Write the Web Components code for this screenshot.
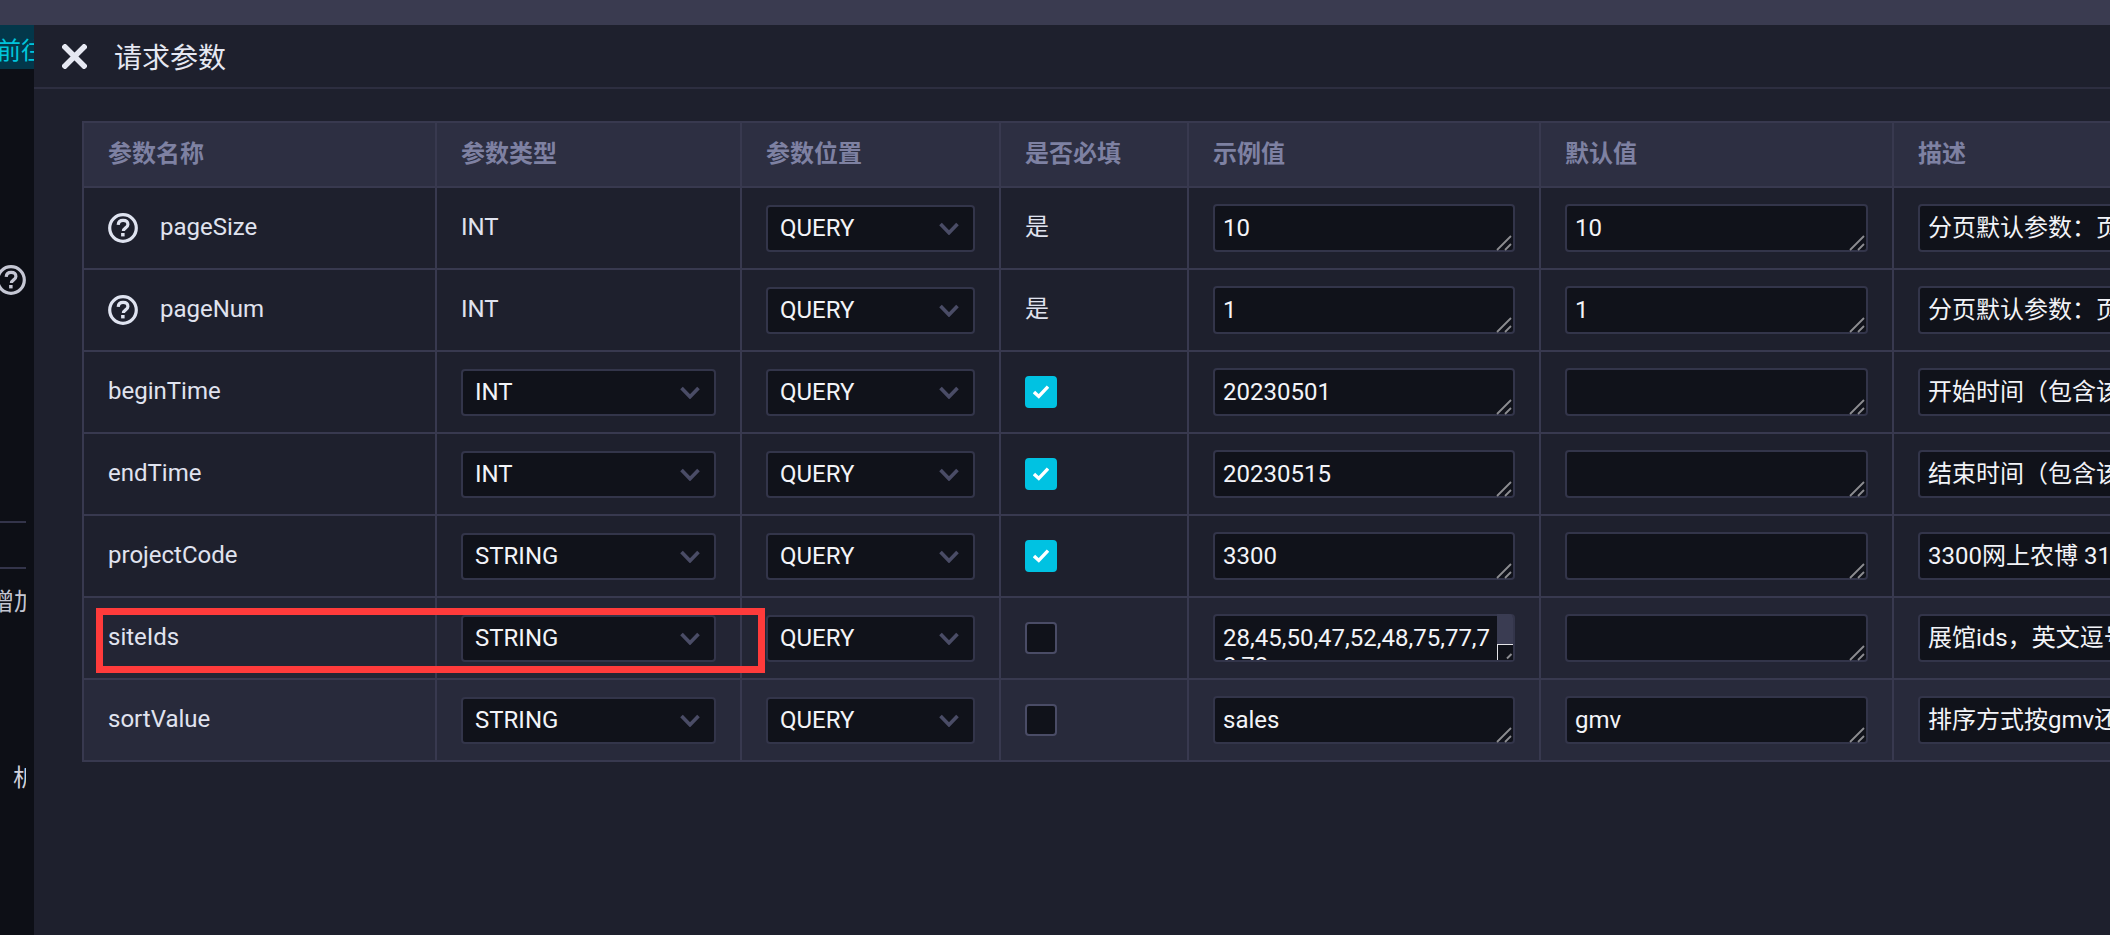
<!DOCTYPE html>
<html lang="zh">
<head>
<meta charset="utf-8">
<title>请求参数</title>
<style>
    html, body { margin: 0; height: 100%; overflow: hidden; background: #1e202d; }
    body { font: 24px/28px Roboto, "Noto Sans CJK SC", sans-serif; color: #e0e3ef; }
</style>
</head>
<body>
<app-shell>
    <side-rail slot="rail"></side-rail>
    <drawer-panel heading="请求参数">
        <param-table></param-table>
    </drawer-panel>
</app-shell>

<script>
const helpSvg = /*html*/`
    <svg viewBox="0 0 30 30" width="30" height="30" fill="none">
        <circle cx="15" cy="15" r="13.300" stroke="currentColor" stroke-width="3.200"/>
        <path d="M10.200 11.800c.2-2.800 2.200-4.400 4.900-4.400 2.900 0 4.800 1.600 4.800 4 0 3.500-4.500 3.400-4.500 6.700" stroke="currentColor" stroke-width="3.200"/>
        <rect x="13.100" y="20" width="3.500" height="3.400" fill="currentColor"/>
    </svg>
`

class HelpIcon extends HTMLElement {
    constructor() {
        super()
        this.attachShadow({mode: 'open'})
        this.shadowRoot.innerHTML = /*html*/`
            <style>
                :host { display: inline-flex; width: 30px; height: 30px; color: #dfe3f0; flex: none; }
            </style>
            ${helpSvg}
        `
    }
}

class AppShell extends HTMLElement {
    constructor() {
        super()
        this.attachShadow({mode: 'open'})
        this.shadowRoot.innerHTML = /*html*/`
            <style>
                :host { display: flex; flex-direction: column; height: 935px; width: 2110px; overflow: hidden; }
                .top { height: 25px; flex: none; background: #3a3b50; }
                .main { flex: 1; display: flex; min-height: 0; }
            </style>
            <div class="top"></div>
            <div class="main">
                <slot name="rail"></slot>
                <slot></slot>
            </div>
        `
    }
}

class SideRail extends HTMLElement {
    constructor() {
        super()
        this.attachShadow({mode: 'open'})
        this.shadowRoot.innerHTML = /*html*/`
            <style>
                :host { display: block; width: 34px; flex: none; background: #0d0f16; overflow: hidden; }
                .tab {
                    box-sizing: border-box; height: 44px; padding-top: 5px; background: #03374a; color: #00c4dc;
                    overflow: hidden; line-height: 42px; white-space: nowrap; text-indent: -3px;
                }
                .clip { width: 26px; overflow: hidden; white-space: nowrap; }
                .help { margin-top: 196px; height: 30px; }
                .help help-icon { margin-left: -4px; color: #c5c7d4; }
                .line { height: 2px; background: #33344a; }
                .line.a { margin-top: 226px; }
                .line.b { margin-top: 44px; }
                .add { margin-top: 17px; height: 32px; line-height: 32px; color: #c4c6d2; text-indent: -10px; }
                .xi { margin-top: 144px; height: 32px; line-height: 32px; color: #d0d2dc; text-indent: 13px; }
            </style>
            <div class="tab">前往</div>
            <div class="clip help"><help-icon></help-icon></div>
            <div class="clip line a"></div>
            <div class="clip line b"></div>
            <div class="clip add">增加</div>
            <div class="clip xi">析</div>
        `
    }
}

class DrawerPanel extends HTMLElement {
    constructor() {
        super()
        this.attachShadow({mode: 'open'})
        this.shadowRoot.innerHTML = /*html*/`
            <style>
                :host { display: flex; flex-direction: column; flex: 1; min-width: 0; background: #1e202d; overflow: hidden; }
                .header {
                    height: 62px; flex: none; display: flex; align-items: center; gap: 27px;
                    padding-left: 28px; border-bottom: 2px solid #2d2e40;
                }
                .header h2 { margin: 6px 0 0; font-size: 28px; font-weight: 400; color: #e6e8f2; line-height: 36px; }
                .header svg { flex: none; }
                .body { padding: 32px 0 0 48px; }
            </style>
            <header class="header">
                <svg width="25" height="25" viewBox="0 0 25 25" fill="none">
                    <path d="M3 3l19 19M22 3L3 22" stroke="#e6e8f2" stroke-width="5.500" stroke-linecap="square"/>
                </svg>
                <h2>${this.getAttribute('heading')}</h2>
            </header>
            <div class="body"><slot></slot></div>
        `
    }
}

class ParamSelect extends HTMLElement {
    constructor() {
        super()
        this.attachShadow({mode: 'open'})
        this.shadowRoot.innerHTML = /*html*/`
            <style>
                :host {
                    display: flex; align-items: center; justify-content: space-between;
                    box-sizing: border-box; height: 47px; padding: 0 14px 0 12px;
                    background: #10121a; border: 2px solid #33354a; border-radius: 4px; color: #f3f4f8;
                }
                svg { flex: none; }
            </style>
            <span><slot></slot></span>
            <svg width="20" height="13" viewBox="0 0 20 13" fill="none">
                <path d="M1.500 2l8.500 8.800L18.500 2" stroke="#4a4c66" stroke-width="3.600"/>
            </svg>
        `
    }
}

class ParamCheck extends HTMLElement {
    constructor() {
        super()
        this.attachShadow({mode: 'open'})
        const on = this.hasAttribute('checked')
        this.shadowRoot.innerHTML = /*html*/`
            <style>
                :host { display: block; width: 32px; height: 32px; }
                .box {
                    box-sizing: border-box; width: 32px; height: 32px; border-radius: 4px;
                    background: #10121a; border: 2px solid #4a4c66; display: flex;
                    align-items: center; justify-content: center;
                }
                .box.on { background: #00c2e2; border-color: #00c2e2; }
            </style>
            <div class="box ${on ? 'on' : ''}">
                ${on ? `<svg width="16" height="14" viewBox="0 0 16 14" fill="none"><path d="M1 7l4.800 4.400L15 1.600" stroke="#fff" stroke-width="3.400"/></svg>` : ''}
            </div>
        `
    }
}

class ParamInput extends HTMLElement {
    constructor() {
        super()
        this.attachShadow({mode: 'open'})
        const scroll = this.hasAttribute('scroll')
        this.shadowRoot.innerHTML = /*html*/`
            <style>
                :host { display: block; position: relative; }
                textarea {
                    display: block; box-sizing: border-box; width: 100%; height: 48px; margin: 0;
                    padding: 8px; background: #10121a; color: #f3f4f8; outline: none; overflow: hidden;
                    border: 2px solid #33354a; border-radius: 4px; resize: none;
                    font: 24px/28px Roboto, "Noto Sans CJK SC", sans-serif; word-break: break-all;
                }
                textarea.scroll { padding-right: 18px; }
                .grip { position: absolute; right: 0; bottom: 0; width: 20px; height: 20px; pointer-events: none; }
                .bar {
                    position: absolute; right: 2px; top: 0; bottom: 2px; width: 16px;
                    background: #3a3c52; border-radius: 0 4px 0 0; pointer-events: none;
                }
                .corner {
                    position: absolute; left: 0; bottom: 0; box-sizing: border-box; width: 16px; height: 16px;
                    background: #10121a; border: solid #e4e4e8; border-width: 1px 0 0 1px;
                }
                .corner svg { display: block; }
            </style>
            <textarea spellcheck="false" class="${scroll ? 'scroll' : ''}">${this.getAttribute('value') || ''}</textarea>
            ${scroll ? /*html*/`
                <div class="bar"><div class="corner">
                    <svg width="15" height="15" viewBox="0 0 15 15" fill="none"><path d="M9 13.500l4.500-4.500" stroke="#8c8c90" stroke-width="2"/></svg>
                </div></div>
            ` : /*html*/`
                <svg class="grip" viewBox="0 0 20 20" fill="none">
                    <path d="M2 18L16 4M10 18l6-6" stroke="#8c8c90" stroke-width="1.800"/>
                </svg>
            `}
        `
    }
}

const rows = [
    {name: 'pageSize', help: true, type: 'INT', must: '是', eg: '10', def: '10', desc: '分页默认参数：页码大小'},
    {name: 'pageNum', help: true, type: 'INT', must: '是', eg: '1', def: '1', desc: '分页默认参数：页码'},
    {name: 'beginTime', type: 'INT', check: true, eg: '20230501', def: '', desc: '开始时间（包含该日期）'},
    {name: 'endTime', type: 'INT', check: true, eg: '20230515', def: '', desc: '结束时间（包含该日期）'},
    {name: 'projectCode', type: 'STRING', check: true, eg: '3300', def: '', desc: '3300网上农博 3100'},
    {name: 'siteIds', type: 'STRING', check: false, eg: '28,45,50,47,52,48,75,77,70,72', scroll: true, def: '', desc: '展馆ids，英文逗号分隔', tint: '#232534'},
    {name: 'sortValue', type: 'STRING', check: false, eg: 'sales', def: 'gmv', desc: '排序方式按gmv还是按销量', tint: '#282a3b'},
]

const heads = ['参数名称', '参数类型', '参数位置', '是否必填', '示例值', '默认值', '描述']

class ParamTable extends HTMLElement {
    constructor() {
        super()
        this.attachShadow({mode: 'open'})
        this.shadowRoot.innerHTML = /*html*/`
            <style>
                :host {
                    display: grid; position: relative; width: 2200px;
                    grid-template-columns: 353px 305px 259px 188px 352px 353px 390px;
                    grid-template-rows: 65px;
                    grid-auto-rows: 82px;
                    border-top: 2px solid #38394f; border-left: 2px solid #38394f;
                }
                .cell {
                    box-sizing: border-box; display: flex; align-items: center; gap: 22px;
                    padding: 0 24px; border-right: 2px solid #38394f; border-bottom: 2px solid #38394f;
                    white-space: nowrap; min-width: 0;
                }
                .cell > param-select, .cell > param-input { flex: 1; min-width: 0; }
                .txt { margin-bottom: 2px; }
                .head { background: #2d2f42; color: #7e81a2; font-weight: 700; }
                .head span { margin-bottom: 2px; }
                .mark {
                    position: absolute; left: 12px; top: 485px; width: 669px; height: 65px;
                    box-sizing: border-box; border: 7px solid #ff3b3b; pointer-events: none;
                }
            </style>
            ${heads.map(h => `<div class="cell head"><span>${h}</span></div>`).join('')}
            ${rows.map(r => {
                const bg = r.tint ? `style="background:${r.tint}"` : ''
                return /*html*/`
                    <div class="cell" ${bg}>${r.help ? '<help-icon></help-icon>' : ''}<span class="txt">${r.name}</span></div>
                    <div class="cell" ${bg}>${r.help ? `<span class="txt">${r.type}</span>` : `<param-select>${r.type}</param-select>`}</div>
                    <div class="cell" ${bg}><param-select>QUERY</param-select></div>
                    <div class="cell" ${bg}>${r.must ? `<span class="txt">${r.must}</span>` : `<param-check ${r.check ? 'checked' : ''}></param-check>`}</div>
                    <div class="cell" ${bg}><param-input value="${r.eg}" ${r.scroll ? 'scroll' : ''}></param-input></div>
                    <div class="cell" ${bg}><param-input value="${r.def}"></param-input></div>
                    <div class="cell" ${bg}><param-input value="${r.desc}"></param-input></div>
                `
            }).join('')}
            <div class="mark"></div>
        `
    }
}

customElements.define('help-icon', HelpIcon)
customElements.define('param-select', ParamSelect)
customElements.define('param-check', ParamCheck)
customElements.define('param-input', ParamInput)
customElements.define('side-rail', SideRail)
customElements.define('drawer-panel', DrawerPanel)
customElements.define('param-table', ParamTable)
customElements.define('app-shell', AppShell)
</script>
</body>
</html>
